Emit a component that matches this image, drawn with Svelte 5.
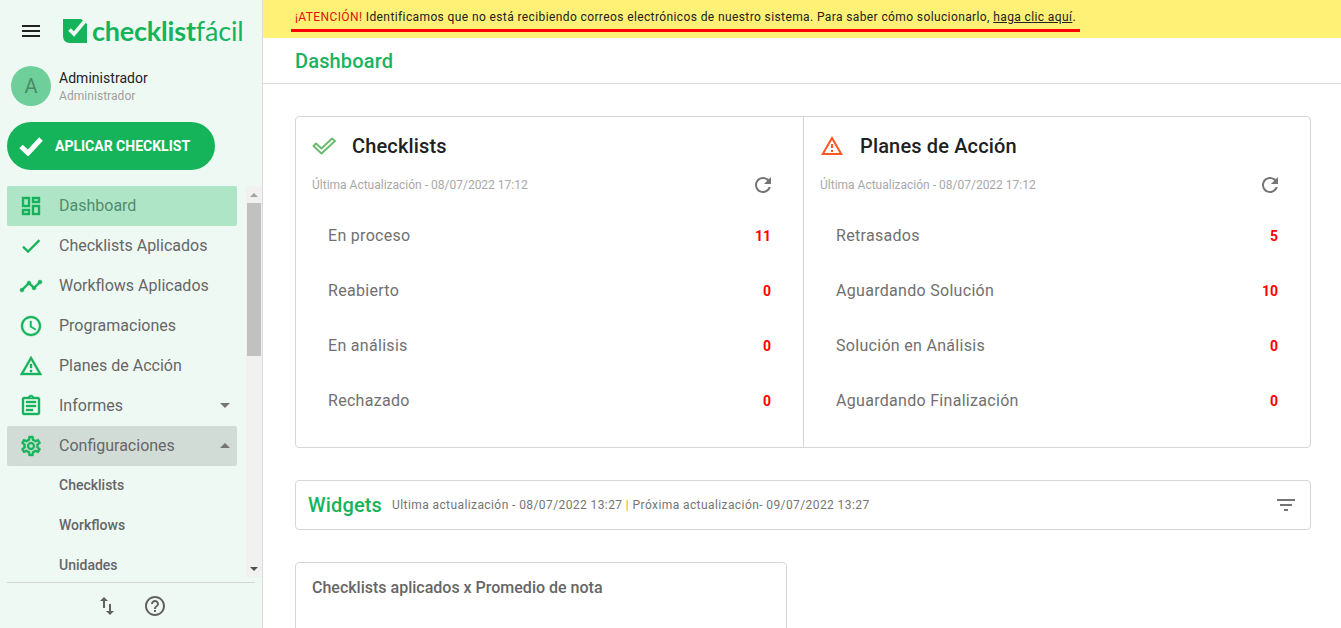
<script>
  const icons = {
    dashboard: 'M19 5v2h-4V5h4M9 5v6H5V5h4m10 8v6h-4v-6h4M9 17v2H5v-2h4M21 3h-8v6h8V3zM11 3H3v10h8V3zm10 8h-8v10h8V11zm-10 4H3v6h8v-6z',
    check: 'M9 16.17L4.83 12l-1.42 1.41L9 19 21 7l-1.41-1.41z',
    timeline: 'M23 8c0 1.1-.9 2-2 2-.18 0-.35-.02-.51-.07l-3.56 3.55c.05.16.07.34.07.52 0 1.1-.9 2-2 2s-2-.9-2-2c0-.18.02-.36.07-.52l-2.55-2.55c-.16.05-.34.07-.52.07s-.36-.02-.52-.07l-4.55 4.56c.05.16.07.33.07.51 0 1.1-.9 2-2 2s-2-.9-2-2 .9-2 2-2c.18 0 .35.02.51.07l4.56-4.55C8.02 9.36 8 9.18 8 9c0-1.1.9-2 2-2s2 .9 2 2c0 .18-.02.36-.07.52l2.55 2.55c.16-.05.34-.07.52-.07s.36.02.52.07l3.55-3.56C19.02 8.35 19 8.18 19 8c0-1.1.9-2 2-2s2 .9 2 2z',
    clock: 'M11.99 2C6.47 2 2 6.48 2 12s4.47 10 9.99 10C17.52 22 22 17.52 22 12S17.52 2 11.99 2zM12 20c-4.42 0-8-3.58-8-8s3.58-8 8-8 8 3.58 8 8-3.58 8-8 8zm.5-13H11v6l5.25 3.15.75-1.23-4.5-2.67z',
    warning: 'M12 5.99L19.53 19H4.47L12 5.99M12 2L1 21h22L12 2zm1 14h-2v2h2v-2zm0-6h-2v4h2v-4z',
    report: 'M7 15h7v2H7zm0-4h10v2H7zm0-4h10v2H7zm12-4h-4.18C14.4 1.84 13.3 1 12 1c-1.3 0-2.4.84-2.82 2H5c-.14 0-.27.01-.4.04-.39.08-.74.28-1.01.55-.18.18-.33.4-.43.64-.1.23-.16.49-.16.77v14c0 .27.06.54.16.78s.25.45.43.64c.27.27.62.47 1.01.55.13.02.26.03.4.03h14c1.1 0 2-.9 2-2V5c0-1.1-.9-2-2-2zm-7-.25c.41 0 .75.34.75.75s-.34.75-.75.75-.75-.34-.75-.75.34-.75.75-.75zM19 19H5V5h14v14z',
    settings: 'M19.43 12.98c.04-.32.07-.64.07-.98 0-.34-.03-.66-.07-.98l2.11-1.65c.19-.15.24-.42.12-.64l-2-3.46c-.09-.16-.26-.25-.44-.25-.06 0-.12.01-.17.03l-2.49 1c-.52-.4-1.08-.73-1.69-.98l-.38-2.65C14.46 2.18 14.25 2 14 2h-4c-.25 0-.46.18-.49.42l-.38 2.65c-.61.25-1.17.59-1.69.98l-2.49-1c-.06-.02-.12-.03-.18-.03-.17 0-.34.09-.43.25l-2 3.46c-.13.22-.07.49.12.64l2.11 1.65c-.04.32-.07.65-.07.98 0 .33.03.66.07.98l-2.11 1.65c-.19.15-.24.42-.12.64l2 3.46c.09.16.26.25.44.25.06 0 .12-.01.17-.03l2.49-1c.52.4 1.08.73 1.69.98l.38 2.65c.03.24.24.42.49.42h4c.25 0 .46-.18.49-.42l.38-2.65c.61-.25 1.17-.59 1.69-.98l2.49 1c.06.02.12.03.18.03.17 0 .34-.09.43-.25l2-3.46c.12-.22.07-.49-.12-.64l-2.11-1.65zm-1.98-1.71c.04.31.05.52.05.73 0 .21-.02.43-.05.73l-.14 1.13.89.7 1.08.84-.7 1.21-1.27-.51-1.04-.42-.9.68c-.43.32-.84.56-1.25.73l-1.06.43-.16 1.13-.2 1.35h-1.4l-.19-1.35-.16-1.13-1.06-.43c-.43-.18-.83-.41-1.23-.71l-.91-.7-1.06.43-1.27.51-.7-1.21 1.08-.84.89-.7-.14-1.13c-.03-.31-.05-.54-.05-.74s.02-.43.05-.73l.14-1.13-.89-.7-1.08-.84.7-1.21 1.27.51 1.04.42.9-.68c.43-.32.84-.56 1.25-.73l1.06-.43.16-1.13.2-1.35h1.39l.19 1.35.16 1.13 1.06.43c.43.18.83.41 1.23.71l.91.7 1.06-.43 1.27-.51.7 1.21-1.07.85-.89.7.14 1.13zM12 8c-2.21 0-4 1.79-4 4s1.79 4 4 4 4-1.79 4-4-1.79-4-4-4zm0 6c-1.1 0-2-.9-2-2s.9-2 2-2 2 .9 2 2-.9 2-2 2z',
    swap: 'M9 3L5 6.99h3V14h2V6.99h3L9 3zm7 14.01V10h-2v7.01h-3L15 21l4-3.99h-3z',
    help: 'M11 18h2v-2h-2v2zm1-16C6.48 2 2 6.48 2 12s4.48 10 10 10 10-4.48 10-10S17.52 2 12 2zm0 18c-4.41 0-8-3.59-8-8s3.59-8 8-8 8 3.59 8 8-3.59 8-8 8zm0-14c-2.21 0-4 1.79-4 4h2c0-1.1.9-2 2-2s2 .9 2 2c0 2-3 1.75-3 5h2c0-2.25 3-2.5 3-5 0-2.21-1.79-4-4-4z',
    refresh: 'M17.65 6.35C16.2 4.9 14.21 4 12 4c-4.42 0-7.99 3.58-7.99 8s3.57 8 7.99 8c3.73 0 6.84-2.55 7.73-6h-2.08c-.82 2.33-3.04 4-5.65 4-3.31 0-6-2.69-6-6s2.69-6 6-6c1.66 0 3.14.69 4.22 1.78L13 11h7V4l-2.35 2.35z',
    filter: 'M10 18h4v-2h-4v2zM3 6v2h18V6H3zm3 7h12v-2H6v2z',
    menu: 'M3 18h18v-2H3v2zm0-5h18v-2H3v2zm0-7v2h18V6H3z'
  };

  const menu = [
    { label: 'Dashboard', icon: 'dashboard', state: 'active' },
    { label: 'Checklists Aplicados', icon: 'check' },
    { label: 'Workflows Aplicados', icon: 'timeline' },
    { label: 'Programaciones', icon: 'clock' },
    { label: 'Planes de Acción', icon: 'warning' },
    { label: 'Informes', icon: 'report', caret: 'down' },
    { label: 'Configuraciones', icon: 'settings', caret: 'up', state: 'open' }
  ];
  const submenu = ['Checklists', 'Workflows', 'Unidades'];

  const panels = [
    {
      title: 'Checklists',
      kind: 'checks',
      rows: [['En proceso', 11], ['Reabierto', 0], ['En análisis', 0], ['Rechazado', 0]]
    },
    {
      title: 'Planes de Acción',
      kind: 'alert',
      rows: [['Retrasados', 5], ['Aguardando Solución', 10], ['Solución en Análisis', 0], ['Aguardando Finalización', 0]]
    }
  ];
</script>

<div class="layout">
  <aside class="sidebar">
    <div class="brand">
      <svg class="burger" viewBox="3 6 18 12"><path d={icons.menu} /></svg>
      <svg class="logo-mark" viewBox="0 0 24 24">
        <path d="M0 0H18L24 5V24H7Q0 24 0 17Z" fill="#16b45a" />
        <path d="M6.5 10.5L11 15L21.5 2.5" fill="none" stroke="#eff9f4" stroke-width="3.6" />
      </svg>
      <span class="logo-text"><b>checklist</b>fácil</span>
    </div>

    <div class="user">
      <div class="avatar">A</div>
      <div>
        <div class="user-name">Administrador</div>
        <div class="user-role">Administrador</div>
      </div>
    </div>

    <button type="button" class="apply">
      <svg viewBox="0 0 24 20"><path d="M2 10.5L9 17L22 3" fill="none" stroke="#fff" stroke-width="5" /></svg>
      APLICAR CHECKLIST
    </button>

    <div class="menu-wrap">
      <nav class="menu">
        {#each menu as item}
          <div class="item {item.state ?? ''}">
            <svg class="item-icon" viewBox="0 0 24 24"><path d={icons[item.icon]} /></svg>
            <span>{item.label}</span>
            {#if item.caret}<i class="caret {item.caret}"></i>{/if}
          </div>
        {/each}
        {#each submenu as sub}
          <div class="sub">{sub}</div>
        {/each}
      </nav>
      <div class="scrollbar">
        <i class="arrow up"></i>
        <div class="thumb"></div>
        <i class="arrow down"></i>
      </div>
    </div>

    <div class="side-foot">
      <svg viewBox="0 0 24 24"><path d={icons.swap} /></svg>
      <svg viewBox="0 0 24 24"><path d={icons.help} /></svg>
    </div>
  </aside>

  <main class="main">
    <div class="banner">
      <span class="banner-text"><em>¡ATENCIÓN!</em> Identificamos que no está recibiendo correos electrónicos de nuestro sistema. Para saber cómo solucionarlo, <u>haga clic aquí</u>.</span>
    </div>
    <header class="page-head">Dashboard</header>

    <div class="content">
      <section class="panels">
        {#each panels as panel}
          <div class="panel">
            <div class="panel-title">
              {#if panel.kind === 'checks'}
                <svg class="panel-icon" viewBox="0 0 24 18">
                  <path d="M1.5 9L4 6.5L9.5 11.5L20 1.5L23 4L9.5 16.5Z" fill="none" stroke="#66bb6a" stroke-width="1.8" stroke-linejoin="round" />
                </svg>
              {:else}
                <svg class="panel-icon" viewBox="0 0 24 24"><path d={icons.warning} fill="#ff5722" /></svg>
              {/if}
              <h2>{panel.title}</h2>
            </div>
            <div class="updated">
              <span>Última Actualización - 08/07/2022 17:12</span>
              <svg viewBox="0 0 24 24"><path d={icons.refresh} /></svg>
            </div>
            {#each panel.rows as [label, value]}
              <div class="row">
                <span>{label}</span>
                <b>{value}</b>
              </div>
            {/each}
          </div>
        {/each}
      </section>

      <section class="widgets">
        <h2>Widgets</h2>
        <span class="widgets-info">Ultima actualización - 08/07/2022 13:27 <em>|</em> Próxima actualización- 09/07/2022 13:27</span>
        <svg viewBox="3 6 18 12"><path d={icons.filter} /></svg>
      </section>

      <section class="widget-card">
        <h3>Checklists aplicados x Promedio de nota</h3>
      </section>
    </div>
  </main>
</div>

<style>
  :global(body) {
    margin: 0;
    background: #fff;
    font-family: Roboto, "Liberation Sans", sans-serif;
    overflow: hidden;
  }

  .layout {
    display: grid;
    grid-template-columns: 263px 1fr;
    height: 628px;
    overflow: hidden;
  }

  .sidebar {
    display: flex;
    flex-direction: column;
    background: #eff9f4;
    border-right: 1px solid #dcdcdc;
    box-sizing: border-box;
    height: 628px;
  }

  .brand {
    display: flex;
    align-items: center;
    height: 62px;
    padding-left: 22px;
    box-sizing: border-box;
  }

  .burger {
    width: 18px;
    height: 12px;
    margin-right: 23px;
    fill: #212121;
  }

  .logo-mark {
    width: 24px;
    height: 24px;
    margin-right: 5px;
  }

  .logo-text {
    font-family: Lato, Roboto, sans-serif;
    font-size: 27px;
    font-weight: 400;
    color: #16b45a;
    line-height: 24px;
    letter-spacing: -0.2px;
  }

  .logo-text b {
    font-weight: 700;
  }

  .user {
    display: flex;
    align-items: center;
    gap: 8px;
    height: 40px;
    margin: 4px 0 16px 11px;
  }

  .avatar {
    width: 40px;
    height: 40px;
    border-radius: 50%;
    background: #6fcf9b;
    color: #4a8a68;
    font-size: 20px;
    line-height: 40px;
    text-align: center;
  }

  .user-name {
    padding-top: 2px;
    font-size: 14px;
    line-height: 18px;
    color: #212121;
    letter-spacing: 0.03px;
  }

  .user-role {
    font-size: 12px;
    line-height: 18px;
    color: #9e9e9e;
    letter-spacing: 0.05px;
  }

  .apply {
    display: flex;
    align-items: center;
    gap: 12px;
    width: 208px;
    height: 48px;
    margin: 0 0 16px 7px;
    padding: 0 0 0 12px;
    border: 0;
    border-radius: 24px;
    background: #16b45a;
    color: #fff;
    font-family: inherit;
    font-size: 14px;
    font-weight: 700;
    box-sizing: border-box;
  }

  .apply svg {
    width: 24px;
    height: 20px;
  }

  .menu-wrap {
    display: flex;
    height: 392px;
    overflow: hidden;
  }

  .menu {
    width: 246px;
    padding-left: 7px;
    box-sizing: border-box;
    overflow: hidden;
    flex: none;
  }

  .item {
    display: flex;
    align-items: center;
    width: 230px;
    height: 40px;
    padding-left: 12px;
    box-sizing: border-box;
    border-radius: 2px;
    font-size: 16px;
    color: #666;
  }

  .item.active {
    background: #aee5c6;
    color: #4f8d6d;
  }

  .item.open {
    background: #d2dcd7;
  }

  .item-icon {
    width: 24px;
    height: 24px;
    margin-right: 16px;
    fill: #16b45a;
    stroke: #16b45a;
    stroke-width: 0.4;
    flex: none;
  }

  .caret {
    margin-left: auto;
    margin-right: 7px;
    border-left: 5px solid transparent;
    border-right: 5px solid transparent;
  }

  .caret.down {
    border-top: 5px solid #757575;
  }

  .caret.up {
    border-bottom: 5px solid #757575;
  }

  .sub {
    height: 40px;
    padding-left: 52px;
    font-size: 14px;
    font-weight: 500;
    line-height: 38px;
    color: #666;
  }

  .scrollbar {
    display: flex;
    flex-direction: column;
    align-items: center;
    width: 16px;
    background: #f1f1f1;
  }

  .thumb {
    width: 14px;
    height: 153px;
    margin-top: 6px;
    background: #c1c1c1;
  }

  .arrow {
    flex: none;
    border-left: 4px solid transparent;
    border-right: 4px solid transparent;
  }

  .arrow.up {
    margin-top: 7px;
    border-bottom: 4px solid #a3a3a3;
  }

  .arrow.down {
    margin-top: auto;
    margin-bottom: 6px;
    border-top: 4px solid #505050;
  }

  .side-foot {
    display: flex;
    justify-content: center;
    align-items: center;
    gap: 24px;
    height: 45px;
    margin: 5px 7px 0;
    border-top: 1px solid #d5d5d5;
  }

  .side-foot svg {
    width: 24px;
    height: 24px;
    fill: #616161;
  }

  .main {
    min-width: 0;
    height: 628px;
    overflow: hidden;
  }

  .banner {
    height: 38px;
    background: #fff176;
    padding-left: 28px;
    box-sizing: border-box;
  }

  .banner-text {
    display: inline-block;
    margin-top: 9px;
    padding: 0 4px 4px;
    border-bottom: 3px solid #f00;
    font-size: 12px;
    line-height: 16px;
    letter-spacing: 0.39px;
    color: #212121;
  }

  .banner-text em {
    font-style: normal;
    color: #e01010;
  }

  .page-head {
    height: 46px;
    padding-left: 32px;
    border-bottom: 1px solid #ddd;
    box-sizing: border-box;
    font-size: 20px;
    font-weight: 500;
    line-height: 46px;
    letter-spacing: 0.15px;
    color: #19b35f;
  }

  .content {
    padding: 32px 30px 0 32px;
  }

  .panels {
    display: grid;
    grid-template-columns: 1fr 1fr;
    height: 332px;
    border: 1px solid #d6d6d6;
    border-radius: 4px;
    box-sizing: border-box;
  }

  .panel {
    padding: 16px 32px 0 16px;
  }

  .panel + .panel {
    border-left: 1px solid #d6d6d6;
  }

  .panel-title {
    display: flex;
    align-items: center;
    gap: 16px;
    height: 26px;
  }

  .panel-icon {
    width: 24px;
    height: 24px;
    flex: none;
  }

  h2 {
    margin: 0;
    font-size: 20px;
    font-weight: 500;
    letter-spacing: 0.15px;
    color: #212121;
  }

  .updated {
    display: flex;
    justify-content: space-between;
    align-items: center;
    height: 24px;
    margin-top: 14px;
    margin-bottom: 11px;
    font-size: 12px;
    color: #a8a8a8;
  }

  .updated svg {
    width: 24px;
    height: 24px;
    fill: #757575;
    margin-right: -4px;
  }

  .row {
    display: flex;
    justify-content: space-between;
    align-items: center;
    height: 55px;
    padding-left: 16px;
    font-size: 16px;
    color: #707070;
    letter-spacing: 0.3px;
  }

  .row b {
    font-size: 14px;
    font-weight: 700;
    letter-spacing: 0;
    color: #f00;
  }

  .widgets {
    display: flex;
    align-items: center;
    height: 50px;
    margin-top: 32px;
    padding: 0 15px 0 12px;
    border: 1px solid #d6d6d6;
    border-radius: 4px;
    box-sizing: border-box;
  }

  .widgets h2 {
    color: #16b45a;
    margin-right: 10px;
  }

  .widgets-info {
    font-size: 12px;
    color: #757575;
    letter-spacing: 0.41px;
  }

  .widgets-info em {
    font-style: normal;
    color: #ff9800;
  }

  .widgets svg {
    width: 18px;
    height: 12px;
    margin-left: auto;
    fill: #757575;
  }

  .widget-card {
    width: 492px;
    height: 100px;
    margin-top: 32px;
    padding: 16px;
    border: 1px solid #d6d6d6;
    border-radius: 4px;
    box-sizing: border-box;
  }

  h3 {
    margin: 0;
    font-size: 16px;
    font-weight: 500;
    line-height: 18px;
    color: #666;
  }
</style>
